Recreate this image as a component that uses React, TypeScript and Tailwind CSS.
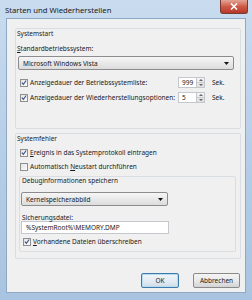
import React from 'react';

const Check = ({ checked }: { checked: boolean }) => (
  <div className="w-[8px] h-[8px] shrink-0 border border-[#8f8f8f] bg-gradient-to-br from-[#e4e4e4] to-[#fbfbfb] flex items-center justify-center">
    {checked && (
      <svg width="7" height="7" viewBox="0 0 7 7">
        <path d="M1 3.6 L2.8 5.6 L6 1.2" fill="none" stroke="#3c4f8a" strokeWidth="1.3" />
      </svg>
    )}
  </div>
);

const Combo = ({ value, width }: { value: string; width: string }) => (
  <div className={`${width} h-[14px] border border-[#8c8c8c] rounded-[2px] bg-gradient-to-b from-[#f6f6f6] to-[#dcdcdc] flex items-center pl-[4px] pr-[4px]`}>
    <span className="flex-1 truncate">{value}</span>
    <svg width="5" height="3" viewBox="0 0 5 3">
      <path d="M0 0 H5 L2.5 3 Z" fill="#111" />
    </svg>
  </div>
);

const Spin = ({ value }: { value: string }) => (
  <div className="flex h-[11px]">
    <div className="w-[19px] h-full bg-white border border-[#c4c7cc] flex items-center pl-[3px]">{value}</div>
    <div className="w-[8px] h-full border border-[#c4c7cc] border-l-0 flex flex-col bg-gradient-to-b from-[#f4f4f4] to-[#dfdfdf]">
      <div className="flex-1 flex items-center justify-center border-b border-[#c9cbce]">
        <svg width="4" height="2" viewBox="0 0 4 2"><path d="M0 2 L2 0 L4 2 Z" fill="#666" /></svg>
      </div>
      <div className="flex-1 flex items-center justify-center">
        <svg width="4" height="2" viewBox="0 0 4 2"><path d="M0 0 H4 L2 2 Z" fill="#666" /></svg>
      </div>
    </div>
  </div>
);

const CheckRow = ({ checked, children, className = '' }: { checked: boolean; children: React.ReactNode; className?: string }) => (
  <div className={`flex items-center gap-[2px] h-[9px] ${className}`}>
    <Check checked={checked} />
    <span className="whitespace-nowrap">{children}</span>
  </div>
);

export default function App() {
  return (
    <div
      className="w-[252px] h-[300px] bg-gradient-to-b from-[#c9dcef] via-[#b6cee7] to-[#a9c4e0] text-[#1a1a1a] text-[6.5px] leading-[9px] overflow-hidden"
      style={{ fontFamily: '"Noto Sans", "Open Sans", sans-serif' }}
    >
      {/* title bar */}
      <div className="h-[18px] flex items-start">
        <span className="pl-[5px] pt-[5px] text-[7.7px] leading-[10px] text-[#202020]">Starten und Wiederherstellen</span>
        <div className="ml-auto mr-[4px] w-[28px] h-[14px] rounded-b-[3px] border border-[#7a3b33] border-t-0 bg-gradient-to-b from-[#e3a597] via-[#cf5a46] to-[#b7372a] flex items-center justify-center">
          <svg width="8" height="7" viewBox="0 0 8 7">
            <path d="M1 0.5 L7 6.5 M7 0.5 L1 6.5" stroke="#fff" strokeWidth="1.6" />
          </svg>
        </div>
      </div>

      {/* client area */}
      <div className="ml-[6px] w-[240px] h-[275px] bg-[#f0f0f0] border border-[#8ea9c6]">
        {/* Systemstart */}
        <div className="ml-[8px] mt-[9px] w-[226px] h-[101px] border border-[#d9dee3] rounded-[2px] pl-[1px]">
          <div className="h-[9px]">Systemstart</div>
          <div className="mt-[6px] h-[9px]">
            <span className="underline">S</span>tandardbetriebssystem:
          </div>
          <div className="mt-[3px] ml-[1px]">
            <Combo value="Microsoft Windows Vista" width="w-[216px]" />
          </div>
          <div className="mt-[7px] ml-[3px] flex items-center h-[11px]">
            <CheckRow checked className="w-[158px]">Anzeigedauer der Betriebssystemliste:</CheckRow>
            <Spin value="999" />
            <span className="ml-[7px]">Sek.</span>
          </div>
          <div className="mt-[4px] ml-[3px] flex items-center h-[11px]">
            <CheckRow checked className="w-[158px]">Anzeigedauer der Wiederherstellungsoptionen:</CheckRow>
            <Spin value="5" />
            <span className="ml-[7px]">Sek.</span>
          </div>
        </div>

        {/* Systemfehler */}
        <div className="ml-[8px] mt-[4px] w-[226px] h-[126px] border border-[#d9dee3] rounded-[2px] pl-[1px]">
          <div className="h-[9px]">Systemfehler</div>
          <CheckRow checked className="mt-[5px] ml-[3px]">
            <span className="underline">E</span>reignis in das Systemprotokoll eintragen
          </CheckRow>
          <CheckRow checked={false} className="mt-[5px] ml-[3px]">
            Automatisch <span className="underline">N</span>eustart durchführen
          </CheckRow>
          <div className="ml-[2px] mt-[5px] w-[217px] h-[76px] border border-[#d9dee3] rounded-[2px] pl-[1px]">
            <div className="h-[8px] leading-[8px] pl-[1px]">Debuginformationen speichern</div>
            <div className="mt-[7px]">
              <Combo value="Kernelspeicherabbild" width="w-[147px]" />
            </div>
            <div className="mt-[8px] h-[7px] leading-[7px] pl-[1px]">Sicherungsdatei:</div>
            <div className="w-[148px] h-[13px] bg-white border border-[#c4c7cc] flex items-center pl-[4px]">
              %SystemRoot%\MEMORY.DMP
            </div>
            <CheckRow checked className="mt-[3px] ml-[2px]">
              <span className="underline">V</span>orhandene Dateien überschreiben
            </CheckRow>
          </div>
        </div>

        {/* buttons */}
        <div className="mt-[14px] flex justify-end pr-[5px] gap-[14px]">
          <button className="w-[38px] h-[15px] rounded-[2px] border border-[#3d7bad] bg-gradient-to-b from-[#f2f6f9] via-[#e4ecf2] to-[#cfdde8] shadow-[inset_0_0_0_1px_#b7dcf2]">
            OK
          </button>
          <button className="w-[47px] h-[15px] rounded-[2px] border border-[#8a8a8a] bg-gradient-to-b from-[#f4f4f4] via-[#e9e9e9] to-[#d4d4d4]">
            Abbrechen
          </button>
        </div>
      </div>
    </div>
  );
}
